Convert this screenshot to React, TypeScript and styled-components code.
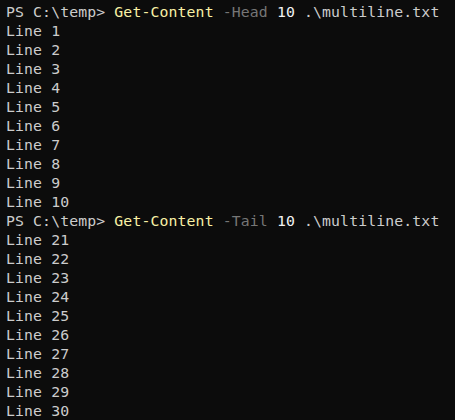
import React from "react";
import styled, { createGlobalStyle } from "styled-components";

const Global = createGlobalStyle`
  html, body { margin: 0; padding: 0; background: #0c0c0c; }
  body { width: 455px; height: 420px; overflow: hidden; }
`;

const Terminal = styled.div`
  box-sizing: border-box;
  width: 455px;
  height: 420px;
  background: #0c0c0c;
  color: #cccccc;
  font-family: "DejaVu Sans Mono", "Liberation Mono", monospace;
  font-size: 14.8px;
  letter-spacing: 0.12px;
  line-height: 19px;
  padding: 2px 0 0 6px;
  white-space: pre;
  overflow: hidden;
`;

const Row = styled.div`
  height: 19px;
`;

const Cmd = styled.span`
  color: #f9f1a5;
`;
const Param = styled.span`
  color: #767676;
`;
const Num = styled.span`
  color: #f2f2f2;
`;

const Prompt: React.FC<{ flag: string }> = ({ flag }) => (
  <Row>
    PS C:\temp&gt; <Cmd>Get-Content</Cmd> <Param>{flag}</Param> <Num>10</Num>{" "}
    .\multiline.txt
  </Row>
);

export default function App() {
  const head = Array.from({ length: 10 }, (_, i) => i + 1);
  const tail = Array.from({ length: 10 }, (_, i) => i + 21);
  return (
    <>
      <Global />
      <Terminal>
        <Prompt flag="-Head" />
        {head.map((n) => (
          <Row key={n}>Line {n}</Row>
        ))}
        <Prompt flag="-Tail" />
        {tail.map((n) => (
          <Row key={n}>Line {n}</Row>
        ))}
      </Terminal>
    </>
  );
}
